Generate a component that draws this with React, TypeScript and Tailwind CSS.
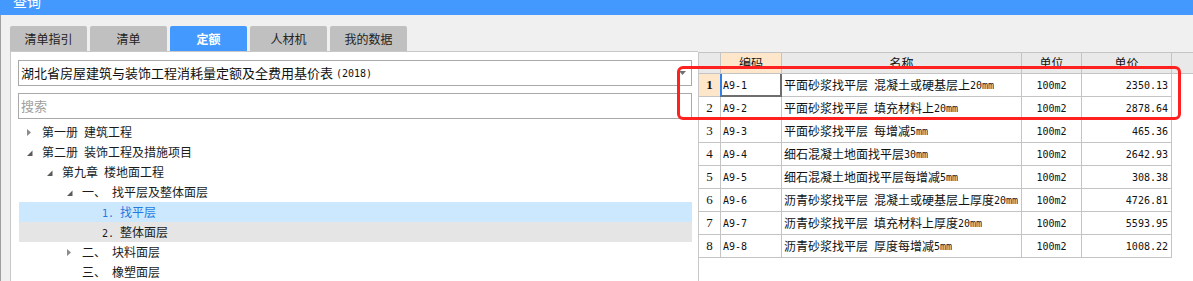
import React from 'react';

interface TreeNode {
  level: number;
  icon?: 'open' | 'closed';
  num?: string;
  numWidth?: string;
  label: string;
  state?: 'selected' | 'hover';
}

interface Row {
  code: string;
  name: string;
  unit: string;
  price: string;
}

const tabs = ['清单指引', '清单', '定额', '人材机', '我的数据'];

const tree: TreeNode[] = [
  { level: 0, icon: 'closed', label: '第一册 建筑工程' },
  { level: 0, icon: 'open', label: '第二册 装饰工程及措施项目' },
  { level: 1, icon: 'open', label: '第九章 楼地面工程' },
  { level: 2, icon: 'open', num: '一、', numWidth: 'w-[30px]', label: '找平层及整体面层' },
  { level: 3, num: '1.', numWidth: 'w-[18px]', label: '找平层', state: 'selected' },
  { level: 3, num: '2.', numWidth: 'w-[18px]', label: '整体面层', state: 'hover' },
  { level: 2, icon: 'closed', num: '二、', numWidth: 'w-[30px]', label: '块料面层' },
  { level: 2, num: '三、', numWidth: 'w-[30px]', label: '橡塑面层' },
];

const levelPad = ['pl-[8px]', 'pl-[28px]', 'pl-[48px]', 'pl-[68px]'];

const rows: Row[] = [
  { code: 'A9-1', name: '平面砂浆找平层 混凝土或硬基层上20mm', unit: '100m2', price: '2350.13' },
  { code: 'A9-2', name: '平面砂浆找平层 填充材料上20mm', unit: '100m2', price: '2878.64' },
  { code: 'A9-3', name: '平面砂浆找平层 每增减5mm', unit: '100m2', price: '465.36' },
  { code: 'A9-4', name: '细石混凝土地面找平层30mm', unit: '100m2', price: '2642.93' },
  { code: 'A9-5', name: '细石混凝土地面找平层每增减5mm', unit: '100m2', price: '308.38' },
  { code: 'A9-6', name: '沥青砂浆找平层 混凝土或硬基层上厚度20mm', unit: '100m2', price: '4726.81' },
  { code: 'A9-7', name: '沥青砂浆找平层 填充材料上厚度20mm', unit: '100m2', price: '5593.95' },
  { code: 'A9-8', name: '沥青砂浆找平层 厚度每增减5mm', unit: '100m2', price: '1008.22' },
];

// latin runs are set in a narrow mono face, like the half-width glyphs of the original
const Mixed = ({ text }: { text: string }) => {
  const parts = text.split(/([\x20-\x7e]+)/).filter(Boolean);
  return (
    <>
      {parts.map((p, i) =>
        /^[\x20-\x7e]+$/.test(p) ? (
          <span key={i} className="font-['DejaVu_Sans_Mono'] text-[10px] whitespace-pre">
            {p}
          </span>
        ) : (
          <span key={i}>{p}</span>
        )
      )}
    </>
  );
};

const TreeIcon = ({ kind }: { kind?: 'open' | 'closed' }) => (
  <svg width="15" height="20" viewBox="0 0 15 20" className="shrink-0">
    {kind === 'closed' && <polygon points="0,7 4,10.5 0,14" fill="#8a8a8a" />}
    {kind === 'open' && <polygon points="5.5,8.5 5.5,14 0,14" fill="#5a5a5a" />}
  </svg>
);

const App = () => {
  return (
    <div className="relative w-[1193px] h-[281px] overflow-hidden bg-[#f0f0f0] font-['Noto_Sans_CJK_SC',sans-serif] text-[12px] text-[#1a1a1a]">
      {/* title bar, cut off at the top */}
      <div className="h-[15px] bg-[#4399fe] overflow-hidden">
        <div className="-mt-[6px] pl-[13px] text-[14px] leading-none text-white">查询</div>
      </div>

      <div className="flex h-[266px] border-l border-[#a0a0a0]">
        {/* left column */}
        <div className="w-[697px] flex flex-col">
          <div className="mt-[11px] ml-[9px] flex gap-[3px]">
            {tabs.map((t) => {
              const active = t === '定额';
              return (
                <div
                  key={t}
                  className={`w-[77px] h-[25px] rounded-t-[2px] flex items-center justify-center text-[12px] ${
                    active ? 'bg-[#4399fe] text-white font-bold' : 'bg-[#c0c0c0] text-[#222]'
                  }`}
                >
                  {t}
                </div>
              );
            })}
          </div>

          <div className="ml-[9px] flex-1 bg-white border-l border-t border-[#c8c8c8] flex flex-col">
            <div className="relative mt-[8px] ml-[7px] w-[674px] h-[26px] border border-[#a9a9a9] flex items-center pl-[2px] text-[13px] text-[#111]">
              <span>湖北省房屋建筑与装饰工程消耗量定额及全费用基价表</span>
              <span className="ml-[3px] font-['DejaVu_Sans_Mono'] text-[10px]">(2018)</span>
              <svg width="7" height="4" viewBox="0 0 7 4" className="absolute right-[5px] top-[10px]">
                <polygon points="0,0 7,0 3.5,4" fill="#707070" />
              </svg>
            </div>

            <div className="mt-[7px] ml-[7px] w-[674px] h-[26px] border border-[#a9a9a9] flex items-center pl-[2px] text-[13px] text-[#a0a0a0]">
              搜索
            </div>

            <div className="mt-[3px] ml-[8px] w-[673px]">
              {tree.map((n, i) => (
                <div
                  key={i}
                  className={`h-[20px] flex items-center ${levelPad[n.level]} ${
                    n.state === 'selected'
                      ? 'bg-[#cce8ff] text-[#1f7ae0]'
                      : n.state === 'hover'
                      ? 'bg-[#e5e5e5]'
                      : ''
                  }`}
                >
                  <TreeIcon kind={n.icon} />
                  {n.num && (
                    <span className={`${n.numWidth} shrink-0`}>
                      <Mixed text={n.num} />
                    </span>
                  )}
                  <span className="whitespace-nowrap">
                    <Mixed text={n.label} />
                  </span>
                </div>
              ))}
            </div>
          </div>
        </div>

        {/* right column: result grid */}
        <div className="flex-1 flex flex-col pt-[37px]">
          <div className="flex-1 bg-white border-l border-[#c8c8c8]">
            <div className="flex h-[22px] border-t border-b border-[#c4c4c4] bg-[#e9e9e9] text-[12px] text-[#111]">
              <div className="w-[22px] border-r border-[#c4c4c4]" />
              <div className="w-[61px] border-r border-[#c4c4c4] bg-[#fde6c9] flex items-center justify-center">编码</div>
              <div className="w-[240px] border-r border-[#c4c4c4] flex items-center justify-center">名称</div>
              <div className="w-[60px] border-r border-[#c4c4c4] flex items-center justify-center">单位</div>
              <div className="w-[90px] border-r border-[#c4c4c4] flex items-center justify-center">单价</div>
            </div>

            {rows.map((r, i) => (
              <div key={r.code} className="flex h-[23px] text-[#111]">
                <div
                  className={`w-[22px] border-r border-b border-[#c4c4c4] flex items-center justify-center font-['Liberation_Serif'] text-[13px] ${
                    i === 0 ? 'bg-[#fde6c9] font-bold' : ''
                  }`}
                >
                  {i + 1}
                </div>
                <div className="relative w-[61px] border-r border-b border-[#c4c4c4] flex items-center pl-[2px]">
                  <Mixed text={r.code} />
                  {i === 0 && (
                    <div className="absolute -left-px top-0 -right-px -bottom-px border-l-2 border-l-[#2f7fe6] border-r-2 border-b-2 border-r-[#6e6e6e] border-b-[#6e6e6e]" />
                  )}
                </div>
                <div className="w-[240px] border-r border-b border-[#c4c4c4] flex items-center pl-[2px] whitespace-nowrap overflow-hidden">
                  <Mixed text={r.name} />
                </div>
                <div className="w-[60px] border-r border-b border-[#c4c4c4] flex items-center justify-center">
                  <Mixed text={r.unit} />
                </div>
                <div className="w-[90px] border-r border-b border-[#c4c4c4] flex items-center justify-end pr-[3px]">
                  <Mixed text={r.price} />
                </div>
              </div>
            ))}
          </div>
        </div>
      </div>

      {/* red annotation box */}
      <div className="absolute left-[677px] top-[66px] w-[504px] h-[54px] border-[3px] border-[#ff2020] rounded-[6px]" />
    </div>
  );
};

export default App;
